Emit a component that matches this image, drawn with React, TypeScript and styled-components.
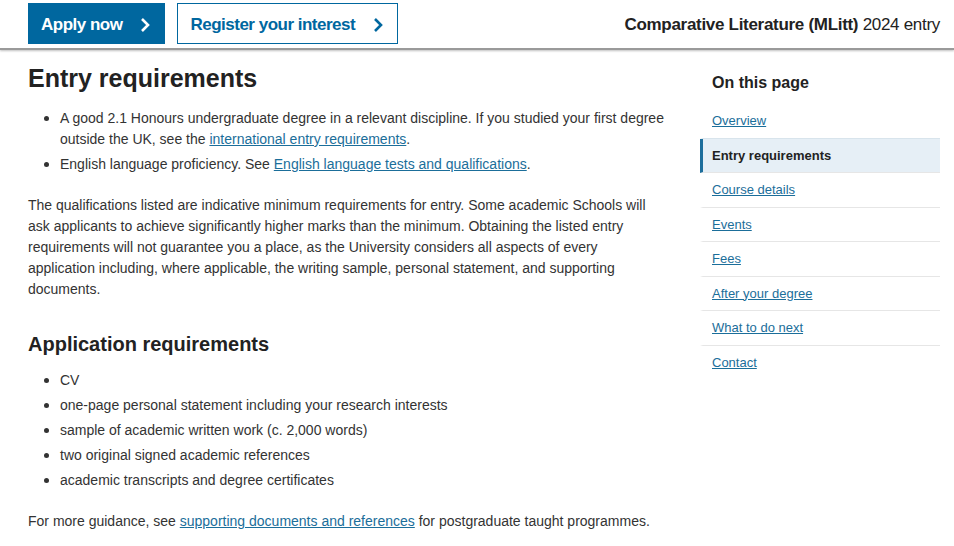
import styled, { createGlobalStyle } from 'styled-components';

const GlobalStyle = createGlobalStyle`
  html, body {
    margin: 0;
    padding: 0;
    background: #fff;
  }
  body {
    font-family: "Liberation Sans", Arial, sans-serif;
    color: #222;
  }
`;

const blue = '#00679f';
const linkBlue = '#1b6e9a';

const TopBar = styled.header`
  display: flex;
  align-items: flex-start;
  justify-content: space-between;
  height: 50px;
  padding: 3px 14px 0 28px;
  box-sizing: border-box;
  border-bottom: 2px solid #9a9a9a;
  box-shadow: 0 1px 2px rgba(0, 0, 0, 0.25);
`;

const Actions = styled.div`
  display: flex;
  gap: 12px;
`;

const ActionButton = styled.a<{ $primary?: boolean }>`
  display: flex;
  align-items: center;
  gap: 18px;
  height: 41px;
  box-sizing: border-box;
  padding: 2px 14px 0 12px;
  font-size: 17px;
  font-weight: 700;
  letter-spacing: -0.5px;
  text-decoration: none;
  background: ${(p) => (p.$primary ? blue : '#fff')};
  color: ${(p) => (p.$primary ? '#fff' : blue)};
  border: 1px solid ${blue};
`;

const Chevron = ({ color }: { color: string }) => (
  <svg width="10" height="16" viewBox="0 0 10 16">
    <path d="M2 2l6 6-6 6" fill="none" stroke={color} strokeWidth="2.6" />
  </svg>
);

const CourseTitle = styled.div`
  margin-top: 12px;
  font-size: 17px;
  letter-spacing: -0.3px;
  color: #222;

  strong {
    font-weight: 700;
  }
`;

const Layout = styled.div`
  display: flex;
  gap: 32px;
  padding: 0 14px 0 28px;
`;

const Main = styled.main`
  width: 640px;
  font-size: 14px;
  line-height: 21px;
  color: #333;
`;

const Heading = styled.h1`
  margin: 11px 0 13px;
  font-size: 25px;
  line-height: 34px;
  font-weight: 700;
  color: #222;
`;

const SubHeading = styled.h2`
  margin: 30px 0 12px;
  font-size: 20px;
  line-height: 28px;
  font-weight: 700;
  color: #222;
`;

const Bullets = styled.ul`
  margin: 0 0 20px;
  padding-left: 32px;
  list-style: none;
`;

const Item = styled.li`
  position: relative;
  margin-bottom: 4px;

  &::before {
    content: '';
    position: absolute;
    left: -16px;
    top: 8px;
    width: 5px;
    height: 5px;
    border-radius: 50%;
    background: #333;
  }
`;

const Para = styled.p`
  margin: 0;
`;

const Link = styled.a`
  color: ${linkBlue};
  text-decoration: underline;
`;

const Sidebar = styled.nav`
  width: 240px;
  padding-top: 24px;
`;

const SideTitle = styled.div`
  padding-left: 12px;
  margin-bottom: 12px;
  font-size: 16px;
  font-weight: 700;
  color: #222;
`;

const SideItem = styled.a<{ $active?: boolean }>`
  display: block;
  padding: 7px 12px 6px 9px;
  font-size: 13px;
  line-height: 20.5px;
  border-left: 3px solid ${(p) => (p.$active ? '#1d6e9c' : 'transparent')};
  border-bottom: 1px solid #e6e6e6;
  background: ${(p) => (p.$active ? '#e6eff6' : 'transparent')};
  color: ${(p) => (p.$active ? '#222' : linkBlue)};
  font-weight: ${(p) => (p.$active ? 700 : 400)};
  text-decoration: ${(p) => (p.$active ? 'none' : 'underline')};

  &:first-of-type {
    border-bottom-color: #d8e4ec;
  }
  &:last-of-type {
    border-bottom: none;
  }
`;

const navItems = [
  'Overview',
  'Entry requirements',
  'Course details',
  'Events',
  'Fees',
  'After your degree',
  'What to do next',
  'Contact',
];

const appReqs = [
  'CV',
  'one-page personal statement including your research interests',
  'sample of academic written work (c. 2,000 words)',
  'two original signed academic references',
  'academic transcripts and degree certificates',
];

export default function App() {
  return (
    <>
      <GlobalStyle />
      <TopBar>
        <Actions>
          <ActionButton $primary href="#">
            Apply now <Chevron color="#fff" />
          </ActionButton>
          <ActionButton href="#">
            Register your interest <Chevron color={blue} />
          </ActionButton>
        </Actions>
        <CourseTitle>
          <strong>Comparative Literature (MLitt)</strong> 2024 entry
        </CourseTitle>
      </TopBar>
      <Layout>
        <Main>
          <Heading>Entry requirements</Heading>
          <Bullets>
            <Item>
              A good 2.1 Honours undergraduate degree in a relevant discipline. If you studied your first degree
              outside the UK, see the <Link href="#">international entry requirements</Link>.
            </Item>
            <Item>
              English language proficiency. See <Link href="#">English language tests and qualifications</Link>.
            </Item>
          </Bullets>
          <Para>
            The qualifications listed are indicative minimum requirements for entry. Some academic Schools will
            ask applicants to achieve significantly higher marks than the minimum. Obtaining the listed entry
            requirements will not guarantee you a place, as the University considers all aspects of every
            application including, where applicable, the writing sample, personal statement, and supporting
            documents.
          </Para>
          <SubHeading>Application requirements</SubHeading>
          <Bullets>
            {appReqs.map((r) => (
              <Item key={r}>{r}</Item>
            ))}
          </Bullets>
          <Para>
            For more guidance, see <Link href="#">supporting documents and references</Link> for postgraduate
            taught programmes.
          </Para>
        </Main>
        <Sidebar>
          <SideTitle>On this page</SideTitle>
          {navItems.map((n) => (
            <SideItem key={n} href="#" $active={n === 'Entry requirements'}>
              {n}
            </SideItem>
          ))}
        </Sidebar>
      </Layout>
    </>
  );
}
